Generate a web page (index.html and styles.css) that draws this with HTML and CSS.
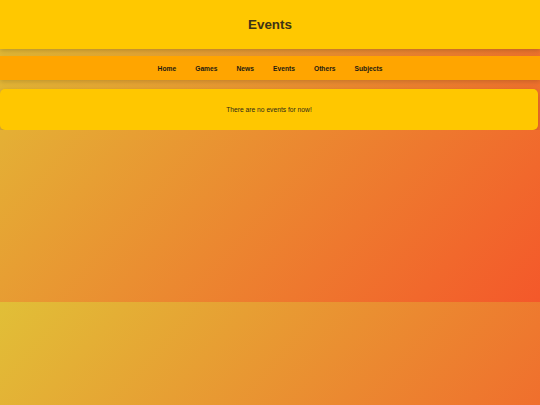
FILE: index.html
```html
<!DOCTYPE html>
<html lang="en">
<head>
<meta charset="utf-8">
<title>Events</title>
<link rel="stylesheet" href="styles.css">
</head>
<body>
<header class="site-header">
  <h1 class="title">Events</h1>
</header>
<nav class="main-nav">
  <a class="nav-link" href="#">Home</a>
  <a class="nav-link" href="#">Games</a>
  <a class="nav-link" href="#">News</a>
  <a class="nav-link" href="#">Events</a>
  <a class="nav-link" href="#">Others</a>
  <a class="nav-link" href="#">Subjects</a>
</nav>
<main class="content">
  <section class="card">
    <p class="empty">There are no events for now!</p>
  </section>
</main>
</body>
</html>
```

FILE: styles.css
```css
html {
  min-height: 100%;
  background: linear-gradient(132deg, #e1bf37 0%, #f4582a 100%);
  background-size: 100% 302px;
  background-repeat: repeat;
}

body {
  margin: 0;
  font-family: "Liberation Sans", Arial, sans-serif;
  color: #333;
}

.site-header {
  height: 49px;
  background: #ffc800;
  display: flex;
  align-items: center;
  justify-content: center;
  box-shadow: 0 2px 5px rgba(0, 0, 0, 0.18);
}

.title {
  margin: 0;
  font-size: 13.4px;
  font-weight: bold;
  color: #3d3416;
}

.main-nav {
  margin-top: 7px;
  height: 24px;
  background: #ffa500;
  display: flex;
  align-items: center;
  justify-content: center;
  gap: 19px;
  box-shadow: 0 2px 5px rgba(0, 0, 0, 0.15);
}

.nav-link {
  font-size: 6.7px;
  font-weight: bold;
  color: #1e1a10;
  text-decoration: none;
}

.content {
  margin-top: 9px;
  padding-right: 2px;
}

.card {
  height: 41px;
  background: #ffc700;
  border-radius: 5px;
  display: flex;
  align-items: center;
  justify-content: center;
  box-shadow: 0 2px 6px rgba(0, 0, 0, 0.18);
}

.empty {
  margin: 0;
  font-size: 6.7px;
  color: #2e2a18;
}
```
